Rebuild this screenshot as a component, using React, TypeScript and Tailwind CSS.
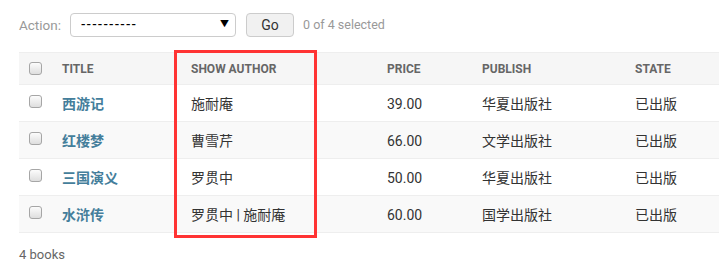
import React from 'react';

type Book = { title: string; author: string; price: string; publish: string; state: string };

const books: Book[] = [
  { title: '西游记', author: '施耐庵', price: '39.00', publish: '华夏出版社', state: '已出版' },
  { title: '红楼梦', author: '曹雪芹', price: '66.00', publish: '文学出版社', state: '已出版' },
  { title: '三国演义', author: '罗贯中', price: '50.00', publish: '华夏出版社', state: '已出版' },
  { title: '水浒传', author: '罗贯中 | 施耐庵', price: '60.00', publish: '国学出版社', state: '已出版' },
];

const cols = 'grid grid-cols-[33px_129px_196px_95px_153px_1fr]';

const Check = () => (
  <span className="block w-[13px] h-[13px] rounded-[3px] border border-[#a6a6a6] bg-gradient-to-b from-[#fcfcfc] to-[#dedede]" />
);

export default function App() {
  return (
    <div className="relative w-[719px] h-[263px] bg-white text-[14px] text-[#333] font-['Roboto','Noto_Sans_CJK_SC',sans-serif] overflow-hidden">
      <div className="flex items-center h-[52px] pl-[19px] pb-[2px]">
        <span className="text-[#999] text-[13.5px] mr-[9px]">Action:</span>
        <div className="flex items-center justify-between w-[166px] h-[24px] border border-[#ccc] rounded-[4px] pl-[10px] pr-[6px] text-black text-[13px] font-medium">
          <span className="tracking-[1.2px]">----------</span>
          <span className="text-[9px]">▼</span>
        </div>
        <button className="ml-[10px] w-[48px] h-[24px] rounded-[4px] border border-[#ccc] bg-[#f1f1f1] text-[#333]">Go</button>
        <span className="ml-[9px] text-[#999] text-[12.5px]">0 of 4 selected</span>
      </div>

      <div className="ml-[19px]">
        <div className={`${cols} items-center h-[33px] pt-[1px] bg-[#f6f6f6] border-t border-b border-[#eee] text-[12px] font-bold text-[#666] uppercase`}>
          <div className="pl-[10px] -mt-[1px]"><Check /></div>
          <div className="pl-[10px]">Title</div>
          <div className="pl-[10px]">Show author</div>
          <div className="pl-[10px]">Price</div>
          <div className="pl-[10px]">Publish</div>
          <div className="pl-[10px]">State</div>
        </div>
        {books.map((b, i) => (
          <div
            key={b.title}
            className={`${cols} items-center h-[37px] pt-[3px] border-b border-[#eee] ${i % 2 === 1 ? 'bg-[#f9f9f9]' : 'bg-white'}`}
          >
            <div className="pl-[10px] -mt-[7px]"><Check /></div>
            <div className="pl-[10px] font-bold text-[#447e9b]">{b.title}</div>
            <div className="pl-[10px]">{b.author}</div>
            <div className="pl-[10px]">{b.price}</div>
            <div className="pl-[10px]">{b.publish}</div>
            <div className="pl-[10px]">{b.state}</div>
          </div>
        ))}
        <div className="pt-[12px] text-[13px] text-[#666]">4 books</div>
      </div>

      <div className="absolute left-[174px] top-[50px] w-[143px] h-[188px] border-[3px] border-[#ff3333] pointer-events-none" />
    </div>
  );
}
